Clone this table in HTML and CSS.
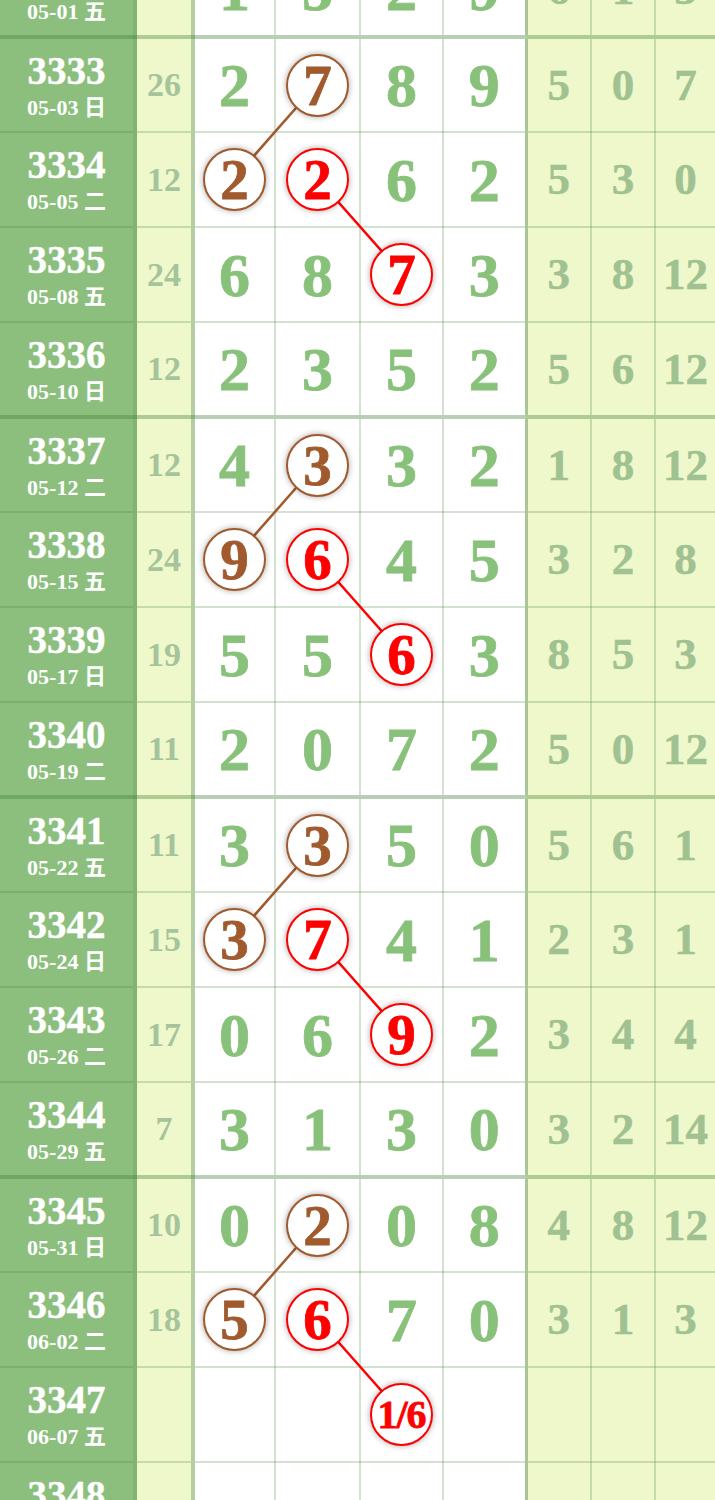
FILE: index.html
```html
<!DOCTYPE html>
<html>
<head>
    <title>走势图</title>
    <meta charset="UTF-8">
    <meta name="viewport" content="width=device-width, initial-scale=1.0">
    <link rel="stylesheet" href="styles.css">
</head>
<body>
    <div class="chart">
        <table>
            <colgroup>
                <col class="c-id"><col class="c-sum">
                <col class="c-n1"><col class="c-n2"><col class="c-n3"><col class="c-n4">
                <col class="c-t1"><col class="c-t2"><col class="c-t3">
            </colgroup>
            <tbody>
                <tr class="end">
                    <td class="id"><b>3332</b><span class="date">05-01 五</span></td>
                    <td class="sum">20</td>
                    <td class="n">1</td><td class="n">5</td><td class="n">2</td><td class="n">9</td>
                    <td class="tail">6</td><td class="tail">1</td><td class="tail">3</td>
                </tr>
                <tr>
                    <td class="id"><b>3333</b><span class="date">05-03 日</span></td>
                    <td class="sum">26</td>
                    <td class="n">2</td><td class="n"><span class="ball brown">7</span></td><td class="n">8</td><td class="n">9</td>
                    <td class="tail">5</td><td class="tail">0</td><td class="tail">7</td>
                </tr>
                <tr>
                    <td class="id"><b>3334</b><span class="date">05-05 二</span></td>
                    <td class="sum">12</td>
                    <td class="n"><span class="ball brown">2</span></td><td class="n"><span class="ball red">2</span></td><td class="n">6</td><td class="n">2</td>
                    <td class="tail">5</td><td class="tail">3</td><td class="tail">0</td>
                </tr>
                <tr>
                    <td class="id"><b>3335</b><span class="date">05-08 五</span></td>
                    <td class="sum">24</td>
                    <td class="n">6</td><td class="n">8</td><td class="n"><span class="ball red">7</span></td><td class="n">3</td>
                    <td class="tail">3</td><td class="tail">8</td><td class="tail">12</td>
                </tr>
                <tr class="end">
                    <td class="id"><b>3336</b><span class="date">05-10 日</span></td>
                    <td class="sum">12</td>
                    <td class="n">2</td><td class="n">3</td><td class="n">5</td><td class="n">2</td>
                    <td class="tail">5</td><td class="tail">6</td><td class="tail">12</td>
                </tr>
                <tr>
                    <td class="id"><b>3337</b><span class="date">05-12 二</span></td>
                    <td class="sum">12</td>
                    <td class="n">4</td><td class="n"><span class="ball brown">3</span></td><td class="n">3</td><td class="n">2</td>
                    <td class="tail">1</td><td class="tail">8</td><td class="tail">12</td>
                </tr>
                <tr>
                    <td class="id"><b>3338</b><span class="date">05-15 五</span></td>
                    <td class="sum">24</td>
                    <td class="n"><span class="ball brown">9</span></td><td class="n"><span class="ball red">6</span></td><td class="n">4</td><td class="n">5</td>
                    <td class="tail">3</td><td class="tail">2</td><td class="tail">8</td>
                </tr>
                <tr>
                    <td class="id"><b>3339</b><span class="date">05-17 日</span></td>
                    <td class="sum">19</td>
                    <td class="n">5</td><td class="n">5</td><td class="n"><span class="ball red">6</span></td><td class="n">3</td>
                    <td class="tail">8</td><td class="tail">5</td><td class="tail">3</td>
                </tr>
                <tr class="end">
                    <td class="id"><b>3340</b><span class="date">05-19 二</span></td>
                    <td class="sum">11</td>
                    <td class="n">2</td><td class="n">0</td><td class="n">7</td><td class="n">2</td>
                    <td class="tail">5</td><td class="tail">0</td><td class="tail">12</td>
                </tr>
                <tr>
                    <td class="id"><b>3341</b><span class="date">05-22 五</span></td>
                    <td class="sum">11</td>
                    <td class="n">3</td><td class="n"><span class="ball brown">3</span></td><td class="n">5</td><td class="n">0</td>
                    <td class="tail">5</td><td class="tail">6</td><td class="tail">1</td>
                </tr>
                <tr>
                    <td class="id"><b>3342</b><span class="date">05-24 日</span></td>
                    <td class="sum">15</td>
                    <td class="n"><span class="ball brown">3</span></td><td class="n"><span class="ball red">7</span></td><td class="n">4</td><td class="n">1</td>
                    <td class="tail">2</td><td class="tail">3</td><td class="tail">1</td>
                </tr>
                <tr>
                    <td class="id"><b>3343</b><span class="date">05-26 二</span></td>
                    <td class="sum">17</td>
                    <td class="n">0</td><td class="n">6</td><td class="n"><span class="ball red">9</span></td><td class="n">2</td>
                    <td class="tail">3</td><td class="tail">4</td><td class="tail">4</td>
                </tr>
                <tr class="end">
                    <td class="id"><b>3344</b><span class="date">05-29 五</span></td>
                    <td class="sum">7</td>
                    <td class="n">3</td><td class="n">1</td><td class="n">3</td><td class="n">0</td>
                    <td class="tail">3</td><td class="tail">2</td><td class="tail">14</td>
                </tr>
                <tr>
                    <td class="id"><b>3345</b><span class="date">05-31 日</span></td>
                    <td class="sum">10</td>
                    <td class="n">0</td><td class="n"><span class="ball brown">2</span></td><td class="n">0</td><td class="n">8</td>
                    <td class="tail">4</td><td class="tail">8</td><td class="tail">12</td>
                </tr>
                <tr>
                    <td class="id"><b>3346</b><span class="date">06-02 二</span></td>
                    <td class="sum">18</td>
                    <td class="n"><span class="ball brown">5</span></td><td class="n"><span class="ball red">6</span></td><td class="n">7</td><td class="n">0</td>
                    <td class="tail">3</td><td class="tail">1</td><td class="tail">3</td>
                </tr>
                <tr>
                    <td class="id"><b>3347</b><span class="date">06-07 五</span></td>
                    <td class="sum"></td>
                    <td class="n"></td><td class="n"></td><td class="n"><span class="ball red small">1/6</span></td><td class="n"></td>
                    <td class="tail"></td><td class="tail"></td><td class="tail"></td>
                </tr>
                <tr class="end">
                    <td class="id"><b>3348</b><span class="date">06-09 日</span></td>
                    <td class="sum"></td>
                    <td class="n"></td><td class="n"></td><td class="n"></td><td class="n"></td>
                    <td class="tail"></td><td class="tail"></td><td class="tail"></td>
                </tr>
            </tbody>
        </table>

        <!-- trend lines between the circled numbers -->
        <svg class="links" width="715" height="1615" viewBox="0 0 715 1615">
            <g stroke="#a05a2e" stroke-width="2.5">
                <line x1="317.5" y1="142.5" x2="234" y2="237.5"/>
                <line x1="317.5" y1="522.5" x2="234" y2="617.5"/>
                <line x1="317.5" y1="902.5" x2="234" y2="997.5"/>
                <line x1="317.5" y1="1282.5" x2="234" y2="1377.5"/>
            </g>
            <g stroke="#ff0000" stroke-width="2.5">
                <line x1="317.5" y1="237.5" x2="401.5" y2="332.5"/>
                <line x1="317.5" y1="617.5" x2="401.5" y2="712.5"/>
                <line x1="317.5" y1="997.5" x2="401.5" y2="1092.5"/>
                <line x1="317.5" y1="1377.5" x2="401.5" y2="1472.5"/>
            </g>
        </svg>
    </div>
</body>
</html>
```

FILE: styles.css
```css
body {
    margin: 0;
    padding: 0;
    background-color: #fff;
    font-family: "Liberation Serif", "Noto Sans CJK SC", serif;
}

.chart {
    position: relative;
    width: 715px;
    margin-top: -59px; /* page is scrolled, row 3332 is cut at the top */
}

.chart table {
    width: 715px;
    table-layout: fixed;
    border-collapse: collapse;
}

.c-id { width: 135px; }
.c-sum { width: 58px; }
.c-n1 { width: 82px; }
.c-n2 { width: 85px; }
.c-n3 { width: 83px; }
.c-n4 { width: 83px; }
.c-t1 { width: 65px; }
.c-t2 { width: 64px; }
.c-t3 { width: 60px; }

.chart tr {
    height: 95px;
}

.chart td {
    padding: 0;
    text-align: center;
    vertical-align: middle;
    font-weight: bold;
    line-height: 1;
    border: 2px solid rgba(70, 130, 60, 0.24);
}

.chart td:first-child {
    border-left: 0;
    border-right: 4px solid #80b473;
}

.chart td:nth-child(2) {
    border-right: 4px solid #b3cda5;
}

.chart td:nth-child(6) {
    border-right: 3px solid #a8c69a;
}

.chart td:last-child {
    border-right: 0;
}

.chart tr.end td {
    border-bottom: 4px solid rgba(70, 130, 60, 0.38);
}

.id {
    background-color: #8cbf7e;
    color: #fff;
    padding-top: 2px !important;
}

.id b {
    display: block;
    font-size: 39px;
    line-height: 36px;
    -webkit-text-stroke: 0.4px #fff;
}

.date {
    display: block;
    margin-top: 7px;
    font-size: 22px;
    line-height: 24px;
}

.sum {
    background-color: #eff8ca;
    color: #a6c49c;
    font-size: 34px;
}

.n {
    background-color: #fff;
    color: #88c17a;
    font-size: 62px;
    -webkit-text-stroke: 0.8px #88c17a;
}

.tail {
    background-color: #eff8ca;
    color: #a0c191;
    font-size: 45px;
    -webkit-text-stroke: 0.5px #a0c191;
}

.ball {
    position: relative;
    z-index: 2;
    display: flex;
    align-items: center;
    justify-content: center;
    width: 63px;
    height: 63px;
    margin: 0 auto;
    box-sizing: border-box;
    border: 2.5px solid;
    border-radius: 50%;
    background-color: #fff;
    font-size: 57px;
    line-height: 1;
    box-shadow: 0 0 6px rgba(0, 0, 0, 0.35);
}

.ball.brown {
    color: #a05a2e;
    border-color: #a05a2e;
    -webkit-text-stroke: 0.8px #a05a2e;
}

.ball.red {
    color: #ff0000;
    border-color: #ff0000;
    -webkit-text-stroke: 0.8px #ff0000;
}

.ball.small {
    font-size: 40px;
    letter-spacing: -1px;
}

.links {
    position: absolute;
    top: 0;
    left: 0;
    z-index: 1;
    pointer-events: none;
}
```
